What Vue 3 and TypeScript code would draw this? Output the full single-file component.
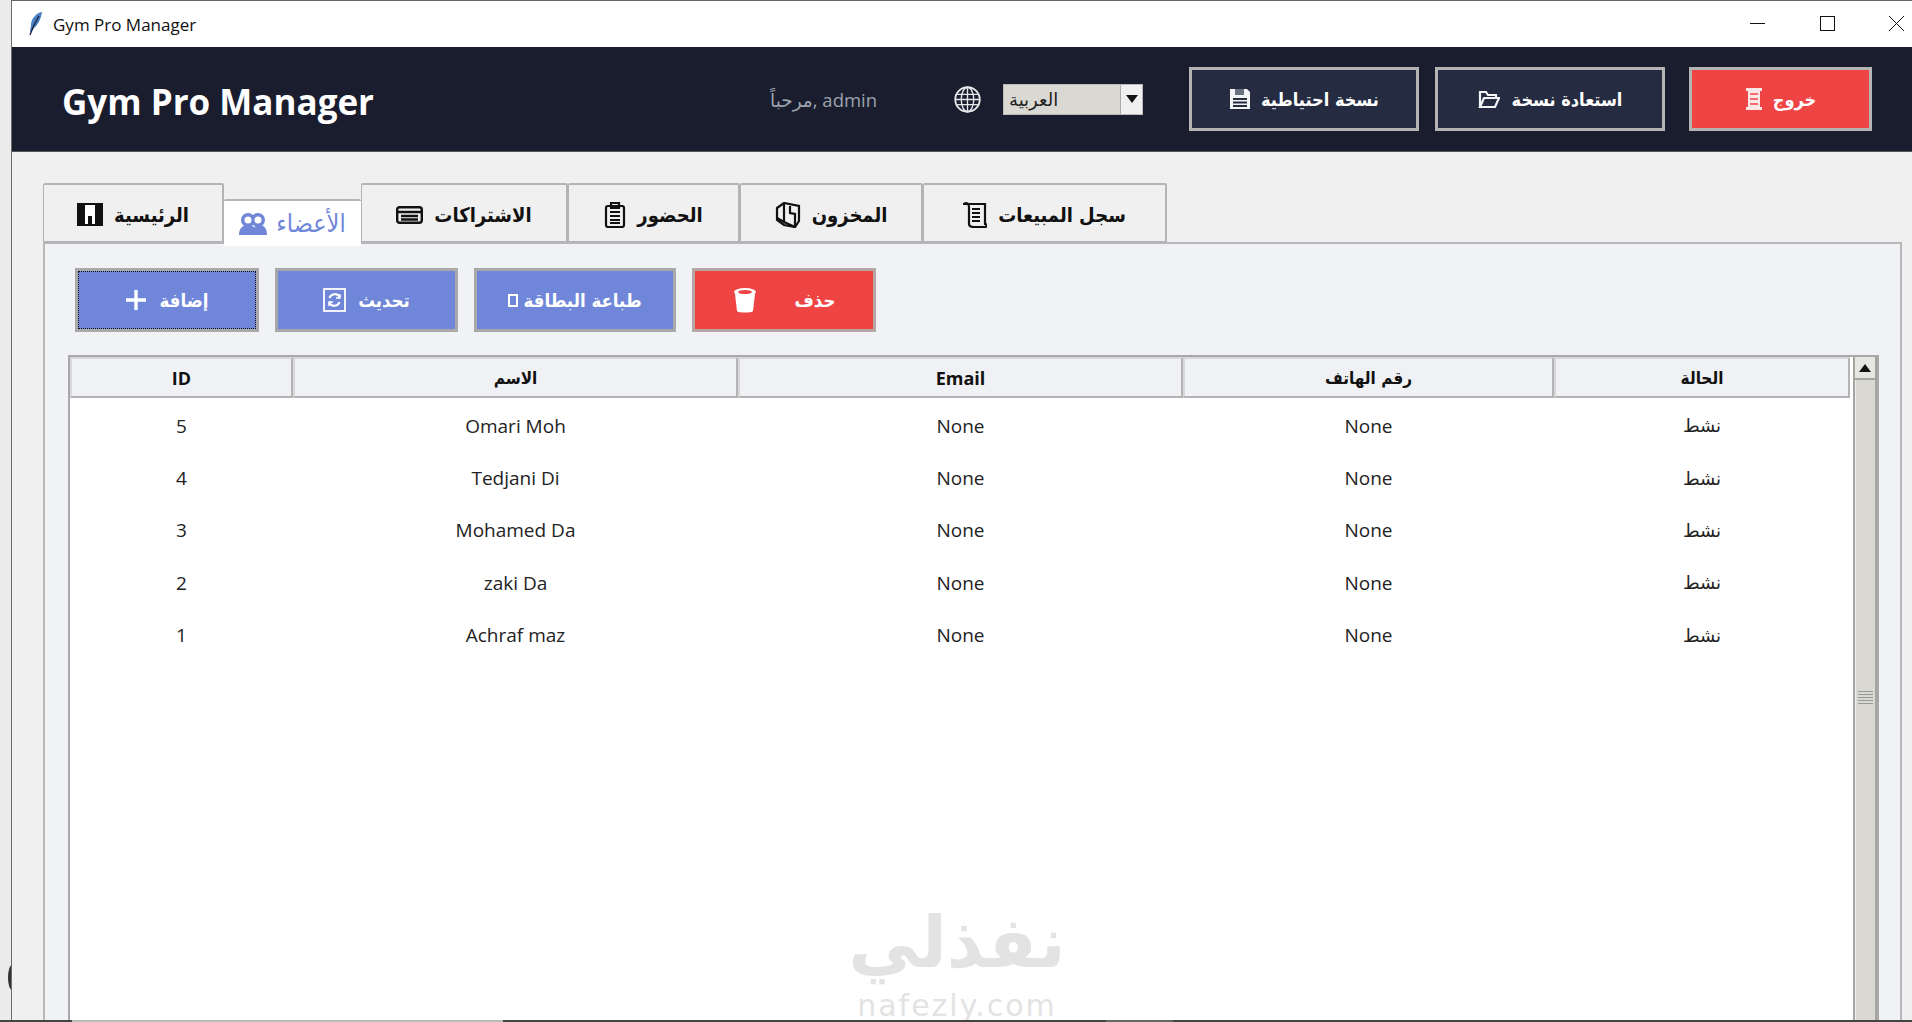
<script setup lang="ts">
interface Member { id: number; name: string }
interface Column { label: string; arabic: boolean }
const members: Member[] = [
  { id: 5, name: 'Omari Moh' },
  { id: 4, name: 'Tedjani Di' },
  { id: 3, name: 'Mohamed Da' },
  { id: 2, name: 'zaki Da' },
  { id: 1, name: 'Achraf maz' },
]
const columns: Column[] = [
  { label: 'ID', arabic: false },
  { label: 'الاسم', arabic: true },
  { label: 'Email', arabic: false },
  { label: 'رقم الهاتف', arabic: true },
  { label: 'الحالة', arabic: true },
]
</script>

<template>
  <div class="screen">
    <span class="blob"></span>
    <div class="window">
      <div class="titlebar">
        <svg class="feather" width="15" height="24" viewBox="0 0 15 24">
          <path d="M14 0C8 1 3 7 3 13l-1 6 1 2 3-5c4-3 7-9 8-16z" fill="#4a7fc4" />
          <path d="M11 4C8 9 5 14 2 23" fill="none" stroke="#16233a" stroke-width="1.300" />
        </svg>
        <span class="title-text">Gym Pro Manager</span>
        <div class="controls">
          <svg width="16" height="16" viewBox="0 0 16 16"><path d="M0 7.500h15" stroke="#111" fill="none" /></svg>
          <svg width="16" height="16" viewBox="0 0 16 16"><rect x=".5" y=".5" width="14" height="14" stroke="#111" fill="none" /></svg>
          <svg width="16" height="16" viewBox="0 0 16 16"><path d="M0 0l15 15M15 0L0 15" stroke="#111" fill="none" /></svg>
        </div>
      </div>

      <header class="header">
        <h1 class="brand">Gym Pro Manager</h1>
        <span class="welcome">مرحباً, admin</span>
        <svg class="globe" width="27" height="27" viewBox="0 0 26 26" fill="#1a1d2e" stroke="#e5e7eb" stroke-width="1.800">
          <circle cx="13" cy="13" r="11.800" />
          <ellipse cx="13" cy="13" rx="6" ry="11.800" fill="none" stroke-width="1.300" />
          <path d="M13 1.500v23M1.500 13h23M3 8h20M3 18h20" fill="none" stroke-width="1.300" />
        </svg>
        <div class="select">
          <span class="select-value">العربية</span>
          <span class="select-arrow"><i></i></span>
        </div>
        <button class="hbtn backup">
          <svg width="22" height="22" viewBox="0 0 22 22"><path d="M1 1h17l3 3v17H1z" fill="#f3f4f6" /><path d="M6 1v6h9V1" fill="#6b7080" /><path d="M4 11h14M4 14.500h14M4 18h14" fill="none" stroke="#252b40" stroke-width="1.800" /></svg>
          <span>نسخة احتياطية</span>
        </button>
        <button class="hbtn restore">
          <svg width="22" height="20" viewBox="0 0 22 20" fill="none" stroke="#f3f4f6" stroke-width="2.200"><path d="M2 18V3h6l2 3h8v3" /><path d="M2 18L6 9h15l-4 9z" /></svg>
          <span>استعادة نسخة</span>
        </button>
        <button class="hbtn exit">
          <svg width="18" height="24" viewBox="0 0 18 24"><path d="M1 1h16v3h-2v16h2v3H1v-3h2V4H1z" fill="#fde8e8" /><path d="M5 7h8M5 12h8M5 17h8" stroke="#ef4444" stroke-width="1.500" /></svg>
          <span>خروج</span>
        </button>
      </header>

      <main class="body">
        <nav class="tabs">
          <div class="tab">
            <svg width="26" height="23" viewBox="0 0 26 23"><rect x="1" y="1" width="24" height="21" fill="#fff" stroke="#111" stroke-width="2" /><path d="M2 2h6v20H2zM11 13h4v9h-4zM18 2h6v20h-6z" fill="#111" /></svg>
            <span>الرئيسية</span>
          </div>
          <div class="tab active">
            <svg width="28" height="24" viewBox="0 0 28 24" fill="#6f86d9"><circle cx="9" cy="8" r="7" /><circle cx="19" cy="8" r="7" /><path d="M0 23c0-7 4-10 9-10s9 3 9 10zM14 23c0-7 2-10 6-10 5 0 8 3 8 10z" /><circle cx="9" cy="8" r="3.500" fill="#fff" /><circle cx="19" cy="8" r="3.500" fill="#fff" /></svg>
            <span>الأعضاء</span>
          </div>
          <div class="tab">
            <svg width="27" height="18" viewBox="0 0 27 18" fill="none" stroke="#111" stroke-width="2.400"><rect x="1.200" y="1.200" width="24.600" height="15.600" rx="2.500" /><path d="M1 6h25M5 10h17M5 13.500h17" /></svg>
            <span>الاشتراكات</span>
          </div>
          <div class="tab">
            <svg width="22" height="26" viewBox="0 0 22 26" fill="none" stroke="#111" stroke-width="2.200"><rect x="2" y="4" width="18" height="21" rx="2" /><path d="M7 1h8v5H7zM6 10h10M6 14h10M6 18h10M6 21h10" /></svg>
            <span>الحضور</span>
          </div>
          <div class="tab">
            <svg width="26" height="26" viewBox="0 0 26 26" fill="none" stroke="#111" stroke-width="2.200"><path d="M2 6l7-5 15 3v15l-4 6-11-2-7-5z" /><path d="M9 1v19l-7-4M9 20l11 5V12l-5-1V4" /></svg>
            <span>المخزون</span>
          </div>
          <div class="tab">
            <svg width="24" height="26" viewBox="0 0 24 26" fill="none" stroke="#111" stroke-width="2.200"><path d="M1 2c3-2 5 0 5 3v17c0 3 3 3 5 3h11c2 0 2-3 0-3V2zM6 2h14" /><path d="M9 7h8M9 11h8M9 15h8M9 19h8" /></svg>
            <span>سجل المبيعات</span>
          </div>
        </nav>

        <section class="panel">
          <div class="actions">
            <button class="abtn add">
              <span class="focus"></span>
              <svg width="22" height="22" viewBox="0 0 22 22"><path d="M11 1v20M1 11h20" stroke="#fff" stroke-width="3.400" /></svg>
              <span>إضافة</span>
            </button>
            <button class="abtn refresh">
              <svg width="23" height="24" viewBox="0 0 23 24" fill="none" stroke="#fff" stroke-width="1.800"><rect x="1" y="1" width="21" height="22" /><path d="M16.500 9a5.500 5.500 0 0 0-10 1M6.500 15a5.500 5.500 0 0 0 10-1" stroke-width="2.200" /><path d="M17 6v4h-4M6 18v-4h4" stroke-width="1.500" /></svg>
              <span>تحديث</span>
            </button>
            <button class="abtn print">
              <i class="tofu"></i>
              <span>طباعة البطاقة</span>
            </button>
            <button class="abtn del">
              <svg width="24" height="26" viewBox="0 0 24 26"><ellipse cx="12" cy="5" rx="11" ry="4" fill="#fff" /><path d="M2 7h20l-2 17c-1 2-15 2-16 0z" fill="#fff" /><ellipse cx="12" cy="5" rx="7" ry="2" fill="#ef4444" /></svg>
              <span>حذف</span>
            </button>
          </div>

          <div class="table-wrap">
            <div class="table">
              <div class="thead">
                <div v-for="c in columns" :key="c.label" class="th" :class="{ 'th-ar': c.arabic }">{{ c.label }}</div>
              </div>
              <div class="tbody">
                <div v-for="m in members" :key="m.id" class="tr">
                  <div class="td">{{ m.id }}</div>
                  <div class="td">{{ m.name }}</div>
                  <div class="td">None</div>
                  <div class="td">None</div>
                  <div class="td status">نشط</div>
                </div>
              </div>
            </div>
            <div class="scrollbar">
              <div class="sb-btn"><i></i></div>
              <div class="thumb"><span class="grip"></span></div>
            </div>
            <div class="watermark">
              <div class="wm-ar">نفذلي</div>
              <div class="wm-en">nafezly.com</div>
            </div>
          </div>
        </section>
      </main>
    </div>
    <div class="strip">
      <span class="seg s1"></span><span class="seg s2"></span><span class="seg s3"></span><span class="seg s4"></span><span class="seg s5"></span>
    </div>
  </div>
</template>

<style>
html, body { margin: 0; padding: 0; overflow: hidden; }
</style>

<style scoped>
.screen {
  position: relative;
  width: 1912px;
  height: 1022px;
  overflow: hidden;
  background: #ececec;
  padding-left: 11px;
  box-sizing: border-box;
  font-family: "Open Sans", "DejaVu Sans", sans-serif;
  color: #111;
}
.blob {
  position: absolute;
  left: 8px;
  top: 965px;
  width: 8px;
  height: 25px;
  border-radius: 50%;
  background: #333;
}
.window {
  position: relative;
  height: 1022px;
  border-left: 1px solid #6b6b6b;
  border-top: 1px solid #666;
  box-sizing: border-box;
  background: #f0f0f0;
  display: flex;
  flex-direction: column;
}
.titlebar {
  height: 46px;
  flex: none;
  background: #fff;
  display: flex;
  align-items: center;
  padding-left: 16px;
}
.feather { margin-right: 10px; }
.title-text { font-size: 17px; }
.controls {
  margin-left: auto;
  display: flex;
  gap: 53.500px;
  margin-right: 7px;
}
.header {
  height: 105px;
  flex: none;
  background: #1a1d2e;
  display: flex;
  align-items: center;
  border-bottom: 1px solid #555;
  box-sizing: border-box;
  padding-left: 50px;
}
.brand {
  margin: 0;
  padding-top: 4px;
  width: 708px;
  font-size: 35px;
  line-height: 1;
  font-weight: 700;
  color: #fff;
  font-family: "Open Sans", sans-serif;
}
.welcome {
  width: 106px;
  font-size: 18.500px;
  color: #9ca3af;
  direction: ltr;
  text-align: right;
  white-space: nowrap;
}
.globe { margin-left: 78px; }
.select {
  margin-left: 22px;
  width: 140px;
  height: 31px;
  box-sizing: border-box;
  border: 1px solid #bbb;
  background: #d9d8d2;
  display: flex;
  align-items: center;
  justify-content: space-between;
  padding-left: 5px;
  font-size: 18px;
  color: #222;
}
.select-value { direction: rtl; }
.select-arrow {
  width: 21px;
  height: 100%;
  background: #f0f0f0;
  border-left: 1px solid #aaa;
  display: flex;
  align-items: center;
  justify-content: center;
}
.select-arrow i {
  width: 0; height: 0;
  border-left: 6px solid transparent;
  border-right: 6px solid transparent;
  border-top: 8px solid #111;
}
.hbtn {
  height: 64px;
  box-sizing: border-box;
  border: 3px solid #b4b4b4;
  background: #252b40;
  color: #fff;
  display: flex;
  align-items: center;
  justify-content: center;
  gap: 12px;
  font: 700 18px "DejaVu Sans Condensed", "DejaVu Sans", sans-serif;
  padding: 0;
}
.backup { width: 230px; margin-left: 46px; gap: 10px; }
.restore { width: 230px; margin-left: 16px; }
.exit { width: 183px; margin-left: 24px; background: #ef4444; gap: 10px; }
.body {
  flex: 1;
  min-height: 0;
  padding: 31px 10px 0 31px;
  display: flex;
  flex-direction: column;
}
.tabs {
  display: flex;
  align-items: flex-end;
  height: 61px;
  flex: none;
  position: relative;
  z-index: 1;
}
.tab {
  height: 60px;
  box-sizing: border-box;
  border: 2px solid #b4b4b4;
  border-left-width: 1px;
  background: #f0f0f0;
  display: flex;
  align-items: center;
  justify-content: center;
  gap: 11px;
  font: 700 20px "DejaVu Sans Condensed", "DejaVu Sans", sans-serif;
  border-radius: 2px 2px 0 0;
  margin-bottom: 1px;
  padding-top: 3px;
}
.tab:nth-child(1) { width: 181px; }
.tab:nth-child(2) { width: 137px; }
.tab:nth-child(3) { width: 207px; }
.tab:nth-child(4) { width: 172px; }
.tab:nth-child(5) { width: 183px; }
.tab:nth-child(6) { width: 244px; }
.tab.active {
  height: 47px;
  margin-bottom: -2px;
  background: #fff;
  color: #6f86d9;
  border-bottom: 0;
  border-left: 0;
  border-right: 0;
  font: 400 25px "DejaVu Sans Condensed", "DejaVu Sans", sans-serif;
  gap: 9px;
  padding-top: 0;
}
.panel {
  flex: 1;
  min-height: 0;
  border: 2px solid #b8b8b8;
  border-bottom: 0;
  margin-top: -2px;
  background: #f0f2f5;
  padding: 24px 21px 0 23px;
  box-sizing: border-box;
  display: flex;
  flex-direction: column;
}
.actions {
  display: flex;
  flex: none;
  height: 64px;
  margin-left: 7px;
}
.abtn {
  position: relative;
  height: 64px;
  box-sizing: border-box;
  border: 3px solid #a9a9a9;
  background: #6f86d9;
  color: #fff;
  display: flex;
  align-items: center;
  justify-content: center;
  gap: 12px;
  padding: 0;
  font: 700 18.500px "DejaVu Sans Condensed", "DejaVu Sans", sans-serif;
}
.add { width: 184px; }
.focus {
  position: absolute;
  inset: 0;
  border: 1px dotted #111;
}
.refresh { width: 183px; margin-left: 16px; }
.print { width: 202px; margin-left: 16px; gap: 5px; }
.del { width: 184px; margin-left: 16px; background: #ef4444; border-color: #b5a5a5; gap: 38px; }
.tofu {
  display: block;
  width: 10px;
  height: 13px;
  border: 2px solid #fff;
  box-sizing: border-box;
}
.table-wrap {
  position: relative;
  flex: 1;
  min-height: 0;
  margin-top: 23px;
  border: 2px solid #a8a8a8;
  border-bottom: 0;
  background: #fff;
  display: flex;
  box-sizing: border-box;
}
.table { flex: 1; min-width: 0; }
.thead, .tr {
  display: grid;
  grid-template-columns: 223px 445px 445px 371px 296px;
}
.thead { height: 41px; }
.th {
  box-sizing: border-box;
  border: 2px solid #b4b4b4;
  border-left-color: #d8d8d8;
  border-top-color: #d8d8d8;
  background: #f0f1f4;
  display: flex;
  align-items: center;
  justify-content: center;
  font-size: 18px;
  font-weight: 700;
  padding-top: 1px;
}
.th-ar {
  font: 700 17px "DejaVu Sans Condensed", "DejaVu Sans", sans-serif;
}
.tbody { padding-top: 1.500px; }
.tr { height: 52.400px; }
.td {
  display: flex;
  align-items: center;
  justify-content: center;
  font-size: 19px;
  color: #222;
}
.status { font: 400 18px "DejaVu Sans", sans-serif; }
.scrollbar {
  width: 24px;
  flex: none;
  margin-left: 4px;
  background: #d9d8d2;
  border-left: 2px solid #a5a5a0;
  border-right: 2px solid #a5a5a0;
  box-sizing: border-box;
  display: flex;
  flex-direction: column;
}
.sb-btn {
  height: 21px;
  background: #e6e6e2;
  border-bottom: 2px solid #a5a5a0;
  display: flex;
  align-items: center;
  justify-content: center;
}
.sb-btn i {
  width: 0; height: 0;
  border-left: 6px solid transparent;
  border-right: 6px solid transparent;
  border-bottom: 8px solid #111;
}
.thumb {
  flex: 1;
  position: relative;
  border-left: 1px solid #eee;
}
.grip {
  position: absolute;
  left: 2px;
  right: 2px;
  top: 311px;
  height: 14px;
  background: repeating-linear-gradient(to bottom, #999 0 1px, #d9d8d2 1px 3px);
}
.watermark {
  position: absolute;
  left: 722px;
  top: 544px;
  width: 330px;
  text-align: center;
  color: #e3e3e3;
  font-family: "DejaVu Sans", sans-serif;
  font-weight: 700;
  pointer-events: none;
}
.wm-ar { font-size: 71px; line-height: 84px; direction: rtl; }
.wm-en { font-size: 30px; line-height: 41px; letter-spacing: 2px; font-weight: 400; }
.strip {
  position: absolute;
  left: 0;
  right: 0;
  bottom: 0;
  height: 2px;
  display: flex;
}
.seg { display: block; height: 2px; }
.s1 { width: 72px; background: #444; }
.s2 { width: 431px; background: #bbb; }
.s3 { width: 603px; background: #444; }
.s4 { width: 67px; background: #666; }
.s5 { flex: 1; background: #444; }
</style>
